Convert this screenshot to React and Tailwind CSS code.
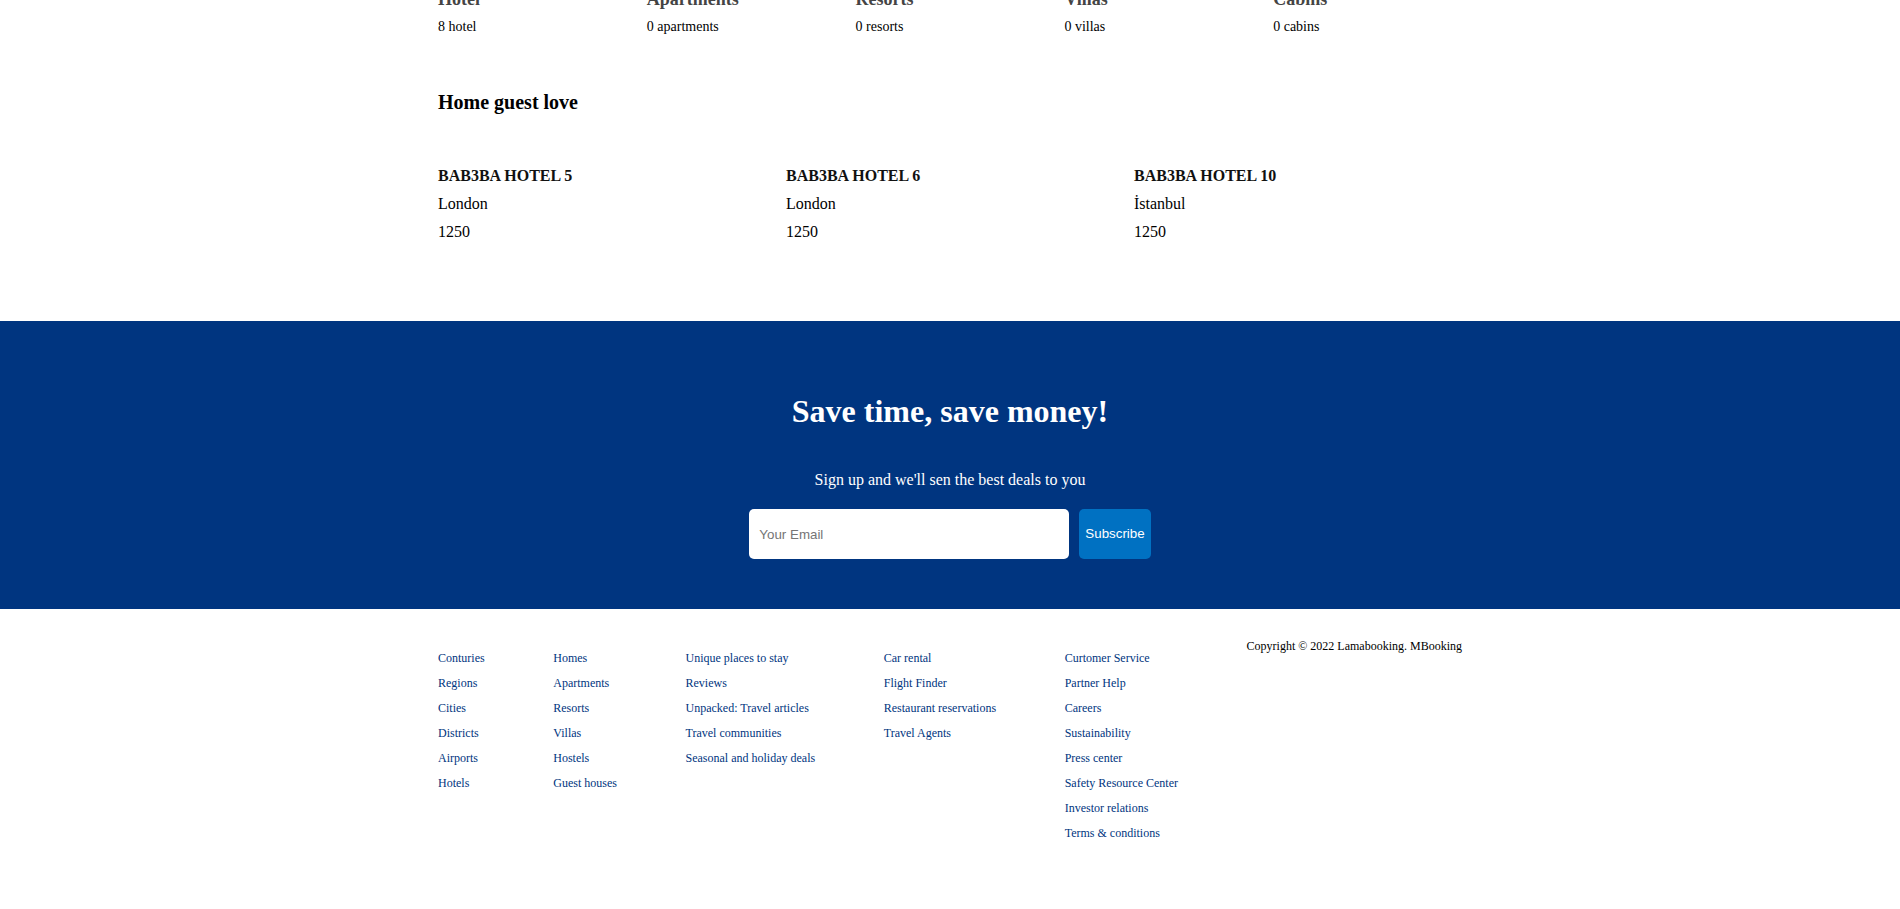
import React from 'react';

const propertyTypes = [
  { title: 'Hotel', count: '8 hotel' },
  { title: 'Apartments', count: '0 apartments' },
  { title: 'Resorts', count: '0 resorts' },
  { title: 'Villas', count: '0 villas' },
  { title: 'Cabins', count: '0 cabins' },
];

const featured = [
  { name: 'BAB3BA HOTEL 5', city: 'London', price: 1250 },
  { name: 'BAB3BA HOTEL 6', city: 'London', price: 1250 },
  { name: 'BAB3BA HOTEL 10', city: 'İstanbul', price: 1250 },
];

const footerLists = [
  ['Conturies', 'Regions', 'Cities', 'Districts', 'Airports', 'Hotels'],
  ['Homes', 'Apartments', 'Resorts', 'Villas', 'Hostels', 'Guest houses'],
  ['Unique places to stay', 'Reviews', 'Unpacked: Travel articles', 'Travel communities', 'Seasonal and holiday deals'],
  ['Car rental', 'Flight Finder', 'Restaurant reservations', 'Travel Agents'],
  [
    'Curtomer Service',
    'Partner Help',
    'Careers',
    'Sustainability',
    'Press center',
    'Safety Resource Center',
    'Investor relations',
    'Terms & conditions',
  ],
];

// page is shown scrolled: the property titles sit partly above the top edge
const PropertyList = () => (
  <div className="w-[1024px] -mt-[11px] grid grid-cols-5 gap-[20px]">
    {propertyTypes.map((p) => (
      <div key={p.title} className="flex flex-col">
        <h1 className="text-[18px] leading-[21px] font-bold text-[#444]">{p.title}</h1>
        <h2 className="mt-[9px] text-[14px] leading-[16px] text-black">{p.count}</h2>
      </div>
    ))}
  </div>
);

const FeaturedProperties = () => (
  <div className="w-[1024px] mt-[53px] grid grid-cols-3 gap-[20px]">
    {featured.map((f) => (
      <div key={f.name} className="flex flex-col gap-[10px] text-[16px] leading-[18px]">
        <span className="font-bold text-[#111]">{f.name}</span>
        <span className="text-black">{f.city}</span>
        <span className="text-black">{f.price}</span>
      </div>
    ))}
  </div>
);

const MailList = () => (
  <div className="w-full mt-[80px] bg-[#003580] text-white flex flex-col items-center pt-[72px] pb-[50px]">
    <h1 className="text-[32px] leading-[37px] font-bold">Save time, save money!</h1>
    <span className="mt-[41px] text-[16px] leading-[18px]">Sign up and we'll sen the best deals to you</span>
    <div className="mt-[20px] flex gap-[10px] font-['Liberation_Sans',Arial,sans-serif]">
      <input
        type="text"
        placeholder="Your Email"
        className="w-[320px] h-[50px] px-[10px] rounded-[5px] bg-white text-[13.33px] text-black placeholder:text-[#757575] outline-none"
      />
      <button className="h-[50px] px-[6px] rounded-[5px] bg-[#0071c2] text-white text-[13.33px] font-medium">
        Subscribe
      </button>
    </div>
  </div>
);

const Footer = () => (
  <div className="w-[1024px] mt-[30px] flex justify-between text-[12px]">
    {footerLists.map((list, i) => (
      <ul key={i} className="pt-[12px]">
        {list.map((item) => (
          <li key={item} className="mb-[10px] leading-[15px] text-[#003580] cursor-pointer whitespace-nowrap">
            {item}
          </li>
        ))}
      </ul>
    ))}
    <div className="leading-[14px] text-black whitespace-nowrap">Copyright © 2022 Lamabooking. MBooking</div>
  </div>
);

export default function App() {
  return (
    <div className="h-[909px] w-full overflow-hidden bg-white font-['Liberation_Serif','Times_New_Roman',serif]">
      <div className="flex flex-col items-center">
        <PropertyList />
        <h1 className="w-[1024px] mt-[56px] text-[20px] leading-[23px] font-bold text-black">Home guest love</h1>
        <FeaturedProperties />
        <MailList />
        <Footer />
      </div>
    </div>
  );
}
